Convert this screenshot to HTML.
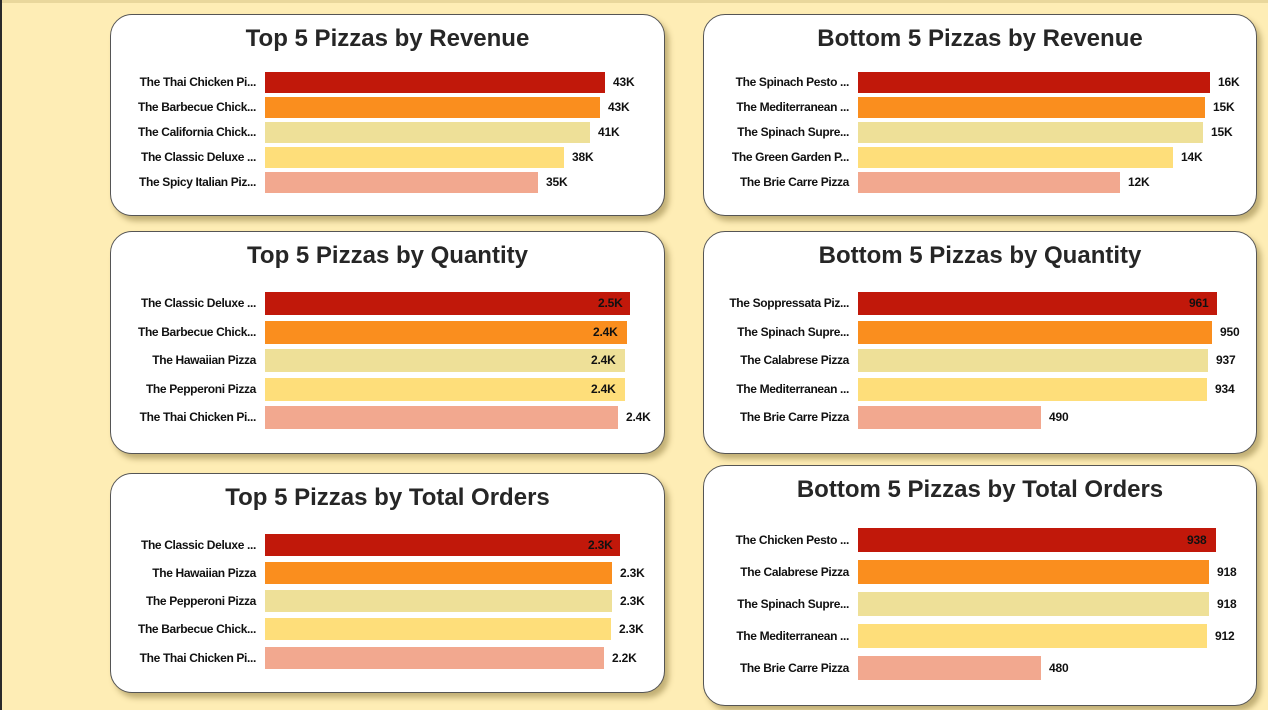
<!DOCTYPE html>
<html><head><meta charset="utf-8"><style>
*{margin:0;padding:0;box-sizing:border-box}
body{width:1268px;height:710px;overflow:hidden;background:#feedb5;position:relative;font-family:"Liberation Sans",sans-serif}
.edge{position:absolute;left:0;top:0;width:2px;height:710px;background:#2a2a2a}
.top{position:absolute;left:0;top:0;width:1268px;height:3px;background:#e9d79c}
.card{position:absolute;background:#fff;border:1px solid #555;border-radius:22px;box-shadow:4px 5px 6px rgba(120,100,40,.45)}
.t{position:absolute;width:100%;text-align:center;font-weight:bold;font-size:24px;color:#262626;letter-spacing:0}
.l{position:absolute;width:160px;text-align:right;font-family:"Liberation Sans Narrow","Liberation Sans",sans-serif;font-weight:bold;font-size:12px;letter-spacing:-0.35px;color:#111;line-height:16px}
.b{position:absolute}
.v{position:absolute;font-family:"Liberation Sans Narrow","Liberation Sans",sans-serif;font-weight:bold;font-size:12px;letter-spacing:-0.2px;color:#111;line-height:16px}
.c1{background:#c1180a}.c2{background:#fa8e1e}.c3{background:#eee098}.c4{background:#fede7a}.c5{background:#f2a88f}
</style></head><body>
<div class="top"></div><div class="edge"></div>

<div class="card" style="left:110px;top:14px;width:555px;height:202px"><div class="t" style="top:10px">Top 5 Pizzas by Revenue</div></div>
<div class="card" style="left:703px;top:14px;width:554px;height:202px"><div class="t" style="top:10px">Bottom 5 Pizzas by Revenue</div></div>
<div class="card" style="left:110px;top:231px;width:555px;height:223px"><div class="t" style="top:10px">Top 5 Pizzas by Quantity</div></div>
<div class="card" style="left:703px;top:231px;width:554px;height:223px"><div class="t" style="top:10px">Bottom 5 Pizzas by Quantity</div></div>
<div class="card" style="left:110px;top:473px;width:555px;height:220px"><div class="t" style="top:10px">Top 5 Pizzas by Total Orders</div></div>
<div class="card" style="left:703px;top:465px;width:554px;height:241px"><div class="t" style="top:10px">Bottom 5 Pizzas by Total Orders</div></div>

<div class="l" style="left:96px;top:74px">The Thai Chicken Pi...</div><div class="b c1" style="left:265px;top:72px;width:340px;height:21px"></div><div class="v" style="left:613px;top:74px">43K</div>
<div class="l" style="left:96px;top:99px">The Barbecue Chick...</div><div class="b c2" style="left:265px;top:97px;width:335px;height:21px"></div><div class="v" style="left:608px;top:99px">43K</div>
<div class="l" style="left:96px;top:124px">The California Chick...</div><div class="b c3" style="left:265px;top:122px;width:325px;height:21px"></div><div class="v" style="left:598px;top:124px">41K</div>
<div class="l" style="left:96px;top:149px">The Classic Deluxe ...</div><div class="b c4" style="left:265px;top:147px;width:299px;height:21px"></div><div class="v" style="left:572px;top:149px">38K</div>
<div class="l" style="left:96px;top:174px">The Spicy Italian Piz...</div><div class="b c5" style="left:265px;top:172px;width:273px;height:21px"></div><div class="v" style="left:546px;top:174px">35K</div>

<div class="l" style="left:689px;top:74px">The Spinach Pesto ...</div><div class="b c1" style="left:858px;top:72px;width:352px;height:21px"></div><div class="v" style="left:1218px;top:74px">16K</div>
<div class="l" style="left:689px;top:99px">The Mediterranean ...</div><div class="b c2" style="left:858px;top:97px;width:347px;height:21px"></div><div class="v" style="left:1213px;top:99px">15K</div>
<div class="l" style="left:689px;top:124px">The Spinach Supre...</div><div class="b c3" style="left:858px;top:122px;width:345px;height:21px"></div><div class="v" style="left:1211px;top:124px">15K</div>
<div class="l" style="left:689px;top:149px">The Green Garden P...</div><div class="b c4" style="left:858px;top:147px;width:315px;height:21px"></div><div class="v" style="left:1181px;top:149px">14K</div>
<div class="l" style="left:689px;top:174px">The Brie Carre Pizza</div><div class="b c5" style="left:858px;top:172px;width:262px;height:21px"></div><div class="v" style="left:1128px;top:174px">12K</div>

<div class="l" style="left:96px;top:295px">The Classic Deluxe ...</div><div class="b c1" style="left:265px;top:292px;width:365px;height:23px"></div><div class="v" style="left:598px;top:295px">2.5K</div>
<div class="l" style="left:96px;top:324px">The Barbecue Chick...</div><div class="b c2" style="left:265px;top:321px;width:362px;height:23px"></div><div class="v" style="left:593px;top:324px">2.4K</div>
<div class="l" style="left:96px;top:352px">The Hawaiian Pizza</div><div class="b c3" style="left:265px;top:349px;width:360px;height:23px"></div><div class="v" style="left:591px;top:352px">2.4K</div>
<div class="l" style="left:96px;top:381px">The Pepperoni Pizza</div><div class="b c4" style="left:265px;top:378px;width:360px;height:23px"></div><div class="v" style="left:591px;top:381px">2.4K</div>
<div class="l" style="left:96px;top:409px">The Thai Chicken Pi...</div><div class="b c5" style="left:265px;top:406px;width:353px;height:23px"></div><div class="v" style="left:626px;top:409px">2.4K</div>

<div class="l" style="left:689px;top:295px">The Soppressata Piz...</div><div class="b c1" style="left:858px;top:292px;width:359px;height:23px"></div><div class="v" style="left:1189px;top:295px">961</div>
<div class="l" style="left:689px;top:324px">The Spinach Supre...</div><div class="b c2" style="left:858px;top:321px;width:354px;height:23px"></div><div class="v" style="left:1220px;top:324px">950</div>
<div class="l" style="left:689px;top:352px">The Calabrese Pizza</div><div class="b c3" style="left:858px;top:349px;width:350px;height:23px"></div><div class="v" style="left:1216px;top:352px">937</div>
<div class="l" style="left:689px;top:381px">The Mediterranean ...</div><div class="b c4" style="left:858px;top:378px;width:349px;height:23px"></div><div class="v" style="left:1215px;top:381px">934</div>
<div class="l" style="left:689px;top:409px">The Brie Carre Pizza</div><div class="b c5" style="left:858px;top:406px;width:183px;height:23px"></div><div class="v" style="left:1049px;top:409px">490</div>

<div class="l" style="left:96px;top:537px">The Classic Deluxe ...</div><div class="b c1" style="left:265px;top:534px;width:355px;height:22px"></div><div class="v" style="left:588px;top:537px">2.3K</div>
<div class="l" style="left:96px;top:565px">The Hawaiian Pizza</div><div class="b c2" style="left:265px;top:562px;width:347px;height:22px"></div><div class="v" style="left:620px;top:565px">2.3K</div>
<div class="l" style="left:96px;top:593px">The Pepperoni Pizza</div><div class="b c3" style="left:265px;top:590px;width:347px;height:22px"></div><div class="v" style="left:620px;top:593px">2.3K</div>
<div class="l" style="left:96px;top:621px">The Barbecue Chick...</div><div class="b c4" style="left:265px;top:618px;width:346px;height:22px"></div><div class="v" style="left:619px;top:621px">2.3K</div>
<div class="l" style="left:96px;top:650px">The Thai Chicken Pi...</div><div class="b c5" style="left:265px;top:647px;width:339px;height:22px"></div><div class="v" style="left:612px;top:650px">2.2K</div>

<div class="l" style="left:689px;top:532px">The Chicken Pesto ...</div><div class="b c1" style="left:858px;top:528px;width:358px;height:24px"></div><div class="v" style="left:1187px;top:532px">938</div>
<div class="l" style="left:689px;top:564px">The Calabrese Pizza</div><div class="b c2" style="left:858px;top:560px;width:351px;height:24px"></div><div class="v" style="left:1217px;top:564px">918</div>
<div class="l" style="left:689px;top:596px">The Spinach Supre...</div><div class="b c3" style="left:858px;top:592px;width:351px;height:24px"></div><div class="v" style="left:1217px;top:596px">918</div>
<div class="l" style="left:689px;top:628px">The Mediterranean ...</div><div class="b c4" style="left:858px;top:624px;width:349px;height:24px"></div><div class="v" style="left:1215px;top:628px">912</div>
<div class="l" style="left:689px;top:660px">The Brie Carre Pizza</div><div class="b c5" style="left:858px;top:656px;width:183px;height:24px"></div><div class="v" style="left:1049px;top:660px">480</div>
</body></html>
